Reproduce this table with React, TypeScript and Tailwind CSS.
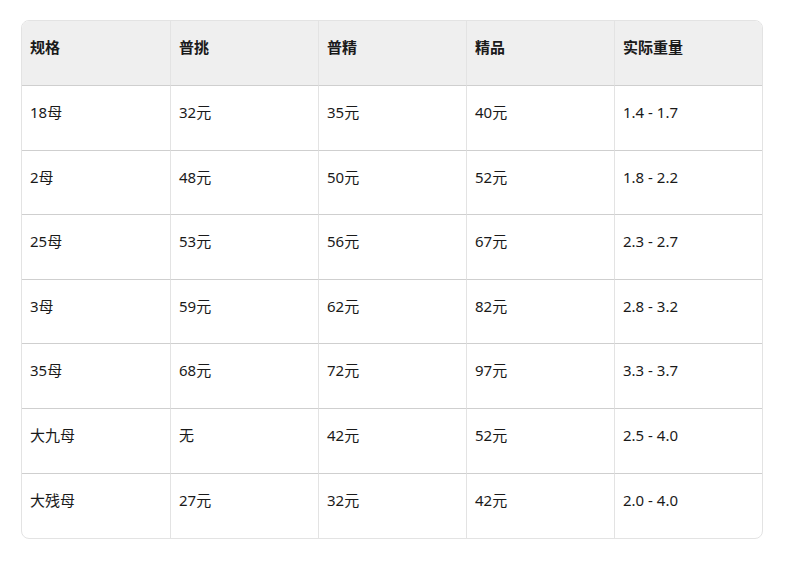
import React, { FC } from "react";

const headers = ["规格", "普挑", "普精", "精品", "实际重量"];

const rows: string[][] = [
  ["18母", "32元", "35元", "40元", "1.4 - 1.7"],
  ["2母", "48元", "50元", "52元", "1.8 - 2.2"],
  ["25母", "53元", "56元", "67元", "2.3 - 2.7"],
  ["3母", "59元", "62元", "82元", "2.8 - 3.2"],
  ["35母", "68元", "72元", "97元", "3.3 - 3.7"],
  ["大九母", "无", "42元", "52元", "2.5 - 4.0"],
  ["大残母", "27元", "32元", "42元", "2.0 - 4.0"],
];

const App: FC = () => {
  return (
    <div className="w-[800px] h-[587px] bg-white pt-[20px] pl-[21px] font-['Noto_Sans','Noto_Sans_CJK_SC',sans-serif] text-[15px] leading-[20px] text-[#1a1a1a]">
      <div className="w-[742px] overflow-hidden rounded-[8px] border border-[#e3e3e3]">
        <table className="w-full table-fixed border-separate border-spacing-0">
          <thead className="bg-[#efefef]">
            <tr>
              {headers.map((h, i) => (
                <th
                  key={h}
                  className={`h-[65px] align-top pt-[16px] pl-[8px] text-left font-bold border-b border-[#cfcfcf] ${
                    i > 0 ? "border-l border-l-[#e3e3e3]" : ""
                  }`}
                >
                  {h}
                </th>
              ))}
            </tr>
          </thead>
          <tbody>
            {rows.map((row, r) => (
              <tr key={row[0]}>
                {row.map((cell, i) => (
                  <td
                    key={i}
                    className={`h-[64.6px] align-top pt-[16px] pl-[8px] ${
                      r < rows.length - 1 ? "border-b border-[#cfcfcf]" : ""
                    } ${i > 0 ? "border-l border-l-[#e3e3e3]" : ""}`}
                  >
                    {cell}
                  </td>
                ))}
              </tr>
            ))}
          </tbody>
        </table>
      </div>
    </div>
  );
};

export default App;
